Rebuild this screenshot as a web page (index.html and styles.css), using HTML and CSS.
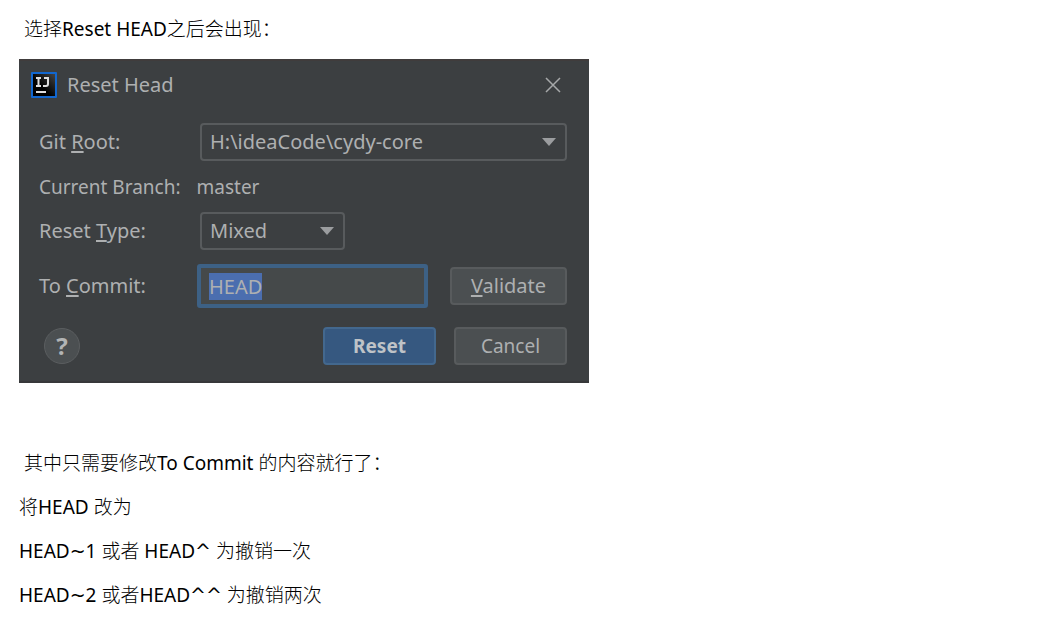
FILE: index.html
```html
<!DOCTYPE html>
<html lang="zh-CN">
<head>
<meta charset="utf-8">
<title>Reset HEAD</title>
<link rel="stylesheet" href="styles.css">
</head>
<body>
<main class="article">
  <p class="lead">选择<span class="latin">Reset HEAD</span>之后会出现：</p>
  <form class="dialog">
    <header class="titlebar">
      <svg class="logo" viewBox="0 0 26 26" aria-hidden="true">
        <defs><linearGradient id="shade" x1="1" y1="0" x2="0" y2="1"><stop offset="0" stop-color="#444"/><stop offset=".6" stop-color="#000"/></linearGradient></defs>
        <rect width="26" height="26" rx="1" fill="#1267cf"/>
        <rect x="2" y="2" width="22" height="22" fill="url(#shade)"/>
        <path d="M5 6h5M7.500 6v8M5 14h5M13 6h4v6q0 2-2 2h-3M5 20h10" fill="none" stroke="#dedede" stroke-width="2"/>
      </svg>
      <h1 class="title">Reset Head</h1>
      <button class="close" type="button" aria-label="Close">
        <svg viewBox="0 0 16 16" width="16" height="16"><path d="M1 1l14 14M15 1L1 15" stroke="#a6a8a9" stroke-width="1.500"/></svg>
      </button>
    </header>
    <div class="row">
      <label class="label" for="root">Git <u>R</u>oot:</label>
      <span class="picker picker-wide">
        <select id="root"><option>H:\ideaCode\cydy-core</option></select>
        <svg class="arrow" viewBox="0 0 14 8" aria-hidden="true"><path d="M0 0h14L7 8z" fill="#9b9d9f"/></svg>
      </span>
    </div>
    <div class="row row-branch"><span>Current Branch:</span><span>master</span></div>
    <div class="row">
      <label class="label" for="type">Reset <u>T</u>ype:</label>
      <span class="picker">
        <select id="type"><option>Mixed</option></select>
        <svg class="arrow" viewBox="0 0 14 8" aria-hidden="true"><path d="M0 0h14L7 8z" fill="#9b9d9f"/></svg>
      </span>
    </div>
    <div class="row row-commit">
      <label class="label label-commit" for="commit">To <u>C</u>ommit:</label>
      <input class="commit" id="commit" type="text" value="HEAD" spellcheck="false">
      <button class="button validate" type="button"><span><u>V</u>alidate</span></button>
    </div>
    <footer class="actions">
      <button class="help" type="button" aria-label="Help">?</button>
      <button class="button primary" type="button">Reset</button>
      <button class="button" type="button">Cancel</button>
    </footer>
  </form>
  <p class="lead">其中只需要修改<span class="latin">To Commit </span>的内容就行了：</p>
  <p>将<span class="latin">HEAD </span>改为</p>
  <p><span class="latin">HEAD<span class="mark">~</span>1 </span>或者<span class="latin"> HEAD<span class="mark">^</span> </span>为撤销一次</p>
  <p><span class="latin">HEAD<span class="mark">~</span>2 </span>或者<span class="latin">HEAD<span class="mark">^^</span> </span>为撤销两次</p>
</main>
<script src="script.js"></script>
</body>
</html>
```

FILE: styles.css
```css
* { box-sizing: border-box; }

body {
  margin: 0;
  background: #fff;
  color: #000;
  font-family: "Noto Sans", "Noto Sans CJK SC", sans-serif;
  font-size: 19px;
  line-height: 24px;
}

.article { padding: 17px 19px 0; }

p { margin: 0 0 20px; font-weight: 300; }
p:last-child { margin-bottom: 0; }
.latin { font-weight: 400; }
.mark { font-family: "DejaVu Sans", sans-serif; line-height: 1; }
.lead { padding-left: 5px; }
.lead:first-child { margin-bottom: 18px; }

.dialog {
  width: 100%;
  max-width: 570px;
  margin-bottom: 68px;
  padding: 0 22px 16px 20px;
  border-top: 2px solid #403c3c;
  border-bottom: 2px solid #37383a;
  background: #3c3f41;
  color: #aeb0b1;
  font-size: 20px;
}

.titlebar {
  display: flex;
  align-items: center;
  height: 48px;
  margin: 0 -4px 14px -8px;
}
.logo { width: 26px; height: 26px; margin-right: 10px; }
.title { flex: 1; margin: 0; font-size: 20px; font-weight: 400; }
.close {
  display: flex;
  margin-right: 10px;
  padding: 0;
  border: 0;
  background: none;
}

.row { display: flex; align-items: center; }
.label { width: 161px; }
.label-commit { width: 158px; }
.row-branch { gap: 16px; margin: 13px 0 12px; height: 26px; font-size: 19px; }
.row-commit { margin: 14px 0 19px; }

u { text-decoration-thickness: 2px; text-underline-offset: 2px; }

.picker { display: grid; align-items: center; width: 145px; }
.picker-wide { flex: 1; width: auto; }
.picker > * { grid-area: 1 / 1; }
.arrow { justify-self: end; width: 14px; height: 8px; margin-right: 11px; pointer-events: none; }

select {
  width: 100%;
  height: 38px;
  padding: 0 30px 0 8px;
  border: 2px solid #585b5d;
  border-radius: 4px;
  appearance: none;
  background: #3c3f41;
  color: inherit;
  font: inherit;
}

.commit {
  flex: 1;
  min-width: 0;
  height: 44px;
  margin-right: 22px;
  padding: 0 8px;
  border: 4px solid #3d6185;
  border-radius: 3px;
  outline: 0;
  background: #45494a;
  color: #aeb0b1;
  font: inherit;
}
.commit::selection { background: #4b6eaf; color: #aeb0b1; }

.button {
  width: 113px;
  height: 38px;
  padding: 0;
  border: 2px solid #585b5d;
  border-radius: 4px;
  background: #4b4f51;
  color: inherit;
  font: inherit;
}
.validate { width: 117px; }
.primary {
  border-color: #43688e;
  background: #365880;
  color: #bfc3c7;
  font-weight: 700;
}

.actions { display: flex; align-items: center; gap: 18px; font-size: 19px; }
.help {
  width: 36px;
  height: 36px;
  margin: 0 auto 0 5px;
  padding: 0;
  border: 1px solid #5b5e60;
  border-radius: 50%;
  background: #4b4f51;
  color: #b2b4b5;
  font: inherit;
  font-size: 24px;
  font-weight: 700;
}
```

FILE: script.js
```js
const commit = document.getElementById("commit");
commit.focus();
commit.select();
```
